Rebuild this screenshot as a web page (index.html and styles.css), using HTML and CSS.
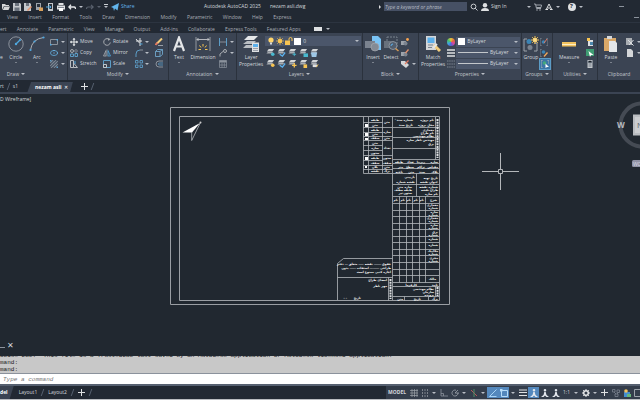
FILE: index.html
```
<!DOCTYPE html>
<html lang="en">
<head>
    <meta charset="UTF-8">
    <meta name="viewport" content="width=device-width, initial-scale=1.0">
    <title>Autodesk AutoCAD 2025 - nezam asli.dwg</title>
    <link rel="stylesheet" href="styles.css">
</head>
<body>
    <!-- shared icons -->
    <svg class="defs" aria-hidden="true">
        <symbol id="layers" viewBox="0 0 10 10"><path d="M3 1h6L7 4H1z" fill="#d4d6d8"/><path d="M2 4.500h6L6.500 6H.5z" fill="#a9adb2"/></symbol>
        <symbol id="bulb" viewBox="0 0 8 8"><circle cx="4" cy="3" r="2.600" fill="#ffd56b"/><path d="M3 5.500h2v2H3z" fill="#d8dadd"/></symbol>
        <symbol id="sun" viewBox="0 0 8 8"><circle cx="4" cy="4" r="2.200" fill="#f7c452"/><path d="M4 0v8M0 4h8M1.200 1.200l5.600 5.600M6.800 1.200L1.200 6.800" stroke="#f7c452" stroke-width=".7"/></symbol>
        <symbol id="doc" viewBox="0 0 8 8"><path d="M1 0h4l2 2v6H1z" fill="#d4d6d8"/></symbol>
        <symbol id="person" viewBox="0 0 8 8"><path d="M4 0a1.300 1.300 0 110 2.600A1.300 1.300 0 014 0zM3.300 3h1.400L5.500 6 8 8H5.500L4 6.500 2.500 8H0l2.500-2z" fill="#e4e8ee"/></symbol>
    </svg>

    <header class="titlebar">
        <div class="quick">
            <button aria-label="Open"><svg viewBox="0 0 8 8"><path d="M0 7V1h3l1 1h3v1H2z" fill="#d4d6d8"/><path d="M2.300 3.500H8L6.500 7H.8z" fill="#d4d6d8"/></svg></button>
            <button aria-label="Save"><svg viewBox="0 0 8 8"><path d="M0 0h7l1 1v7H0z" fill="#c3c7cb"/><path d="M2 0h4v3H2zM1.500 4.500h5V8h-5z" fill="#6a727d"/></svg></button>
            <button aria-label="Save as"><svg viewBox="0 0 8 8"><path d="M0 0h6l1 1v7H0z" fill="#c3c7cb"/><path d="M2 0h3v3H2z" fill="#6a727d"/><path d="M3.500 7.500l4-4" stroke="#e2916b" stroke-width="1.500"/></svg></button>
            <button aria-label="Open from web"><svg viewBox="0 0 8 8"><path d="M1 0h5v7H1z" fill="#9da3ab"/><path d="M2 1h3v3H2z" fill="#2b323d"/><path d="M4 4.500h4V8H4z" fill="#d9a15c"/></svg></button>
            <button aria-label="Save to web"><svg viewBox="0 0 8 8"><path d="M2 0h5v8H2z" fill="#c3c7cb"/><path d="M3 1h3v5H3z" fill="#2b323d"/><path d="M0 4h5M3.500 2.500L5 4 3.500 5.500" stroke="#4fa8e0" fill="none"/></svg></button>
            <button aria-label="Plot"><svg viewBox="0 0 8 8"><path d="M1.500 0h5v2h-5zM0 2.500h8v4H0z" fill="#dfe1e3"/><path d="M2 5h4v3H2z" fill="#fff"/><path d="M1 4.500h6" stroke="#5a626e" stroke-width=".7"/></svg></button>
            <button aria-label="Undo"><svg viewBox="0 0 8 8"><path d="M1 4h5q1.500 0 1.500 2M3 1.800L.8 4 3 6.200" stroke="#e6e8ea" stroke-width="1.300" fill="none"/></svg></button>
            <i class="caret"></i>
            <button aria-label="Redo"><svg viewBox="0 0 8 8"><path d="M7 4H2Q.5 4 .5 6M5 1.800L7.200 4 5 6.200" stroke="#59616d" stroke-width="1.200" fill="none"/></svg></button>
            <i class="caret dim"></i>
            <i class="caret barred"></i>
            <button class="share"><svg viewBox="0 0 8 8"><path d="M0 4l8-4-1.500 7.500L4 5.500 3 8 2.300 5z" fill="#62b5ec"/></svg>Share</button>
        </div>
        <div class="doc-title"><span>Autodesk AutoCAD 2025</span><span>nezam asli.dwg</span></div>
        <div class="account">
            <i class="caret right"></i>
            <input class="search" type="text" placeholder="Type a keyword or phrase" aria-label="Search help">
            <button aria-label="Search"><svg viewBox="0 0 8 8"><circle cx="3.500" cy="3.500" r="2.400" stroke="#c9ccd0" fill="none"/><path d="M5.200 5.200l2.300 2.300" stroke="#c9ccd0"/></svg></button>
            <button class="signin"><svg viewBox="0 0 8 8"><circle cx="4" cy="2.300" r="2.200" fill="#dfe1e3"/><path d="M0 8q0-3 4-3t4 3z" fill="#dfe1e3"/></svg>Sign In</button>
            <i class="caret"></i>
            <button aria-label="App store"><svg viewBox="0 0 8 8"><path d="M0 1h1.500l1 4.500h4.500M2 2h5.500L7 4.500H2.500" stroke="#9da3ab" fill="none"/><circle cx="3" cy="7" r=".8" fill="#9da3ab"/><circle cx="6" cy="7" r=".8" fill="#9da3ab"/></svg></button>
            <button aria-label="Autodesk app"><svg viewBox="0 0 8 8"><path d="M4 1L1 7M4 1l3 6M.5 6.500h2.500M5 6.500h2.500M2.500 5h3" stroke="#dfe1e3" fill="none"/></svg></button>
            <i class="caret"></i>
            <button class="help" aria-label="Help">?</button>
            <i class="caret"></i>
            <button class="minimize" aria-label="Minimize"></button>
        </div>
    </header>

    <nav class="menubar">
        <div class="menu">
            <a href="#">View</a><a href="#">Insert</a><a href="#">Format</a><a href="#">Tools</a><a href="#">Draw</a><a href="#">Dimension</a><a href="#">Modify</a><a href="#">Parametric</a><a href="#">Window</a><a href="#">Help</a><a href="#">Express</a>
        </div>
        <button class="minimize" aria-label="Minimize drawing"></button>
    </nav>

    <nav class="ribbon-tabs">
        <div class="tabs">
            <a href="#">ert</a><a href="#">Annotate</a><a href="#">Parametric</a><a href="#">View</a><a href="#">Manage</a><a href="#">Output</a><a href="#">Add-ins</a><a href="#">Collaborate</a><a href="#">Express Tools</a><a href="#">Featured Apps</a>
        </div>
        <button class="toggle" aria-label="Minimize ribbon"></button><i class="caret"></i>
    </nav>

    <main class="ribbon">
        <section class="panel draw">
            <div class="tools">
                <button class="big cut">e</button>
                <button class="big"><svg viewBox="0 0 16 16"><circle cx="8" cy="8" r="7.200" stroke="#8b929c" fill="none"/><path d="M8 8l4-4" stroke="#4fa8e0" stroke-width="1.200"/><circle cx="8" cy="8" r="1.200" fill="#4fa8e0"/><circle cx="12" cy="4" r="1" fill="#4fa8e0"/></svg>Circle<i class="caret"></i></button>
                <button class="big"><svg viewBox="0 0 16 16"><path d="M1.500 14Q3 3 14.500 1.500" stroke="#a9adb2" fill="none"/><circle cx="1.500" cy="14" r="1.100" fill="#4fa8e0"/><circle cx="5.500" cy="5.500" r="1.100" fill="#4fa8e0"/><circle cx="14.500" cy="1.500" r="1.100" fill="#4fa8e0"/></svg>Arc<i class="caret"></i></button>
                <div class="stack">
                    <button aria-label="Rectangle"><svg viewBox="0 0 8 8"><path d="M.5 1.500h7v5h-7z" stroke="#8b929c" fill="none"/><path d="M0 6h1.500v1.500H0zM6.500 1H8v1.500H6.500z" fill="#4fa8e0"/></svg><i class="caret"></i></button>
                    <button aria-label="Ellipse"><svg viewBox="0 0 8 8"><ellipse cx="4" cy="4" rx="3.500" ry="2.500" stroke="#5c9cc6" fill="none"/><path d="M3.400 3.400h1.200v1.200H3.400zM7 3.400h1v1.200H7zM3.400 1h1.200v1H3.400z" fill="#70bdf0"/></svg><i class="caret"></i></button>
                    <button aria-label="Hatch"><svg viewBox="0 0 8 8"><path d="M.5.5h7v7h-7z" fill="#525e6e"/><path d="M0 3l3-3M0 6l6-6M1 8l7-7M4 8l4-4" stroke="#9aa1aa" stroke-width=".6"/><path d="M0 0h1.500v1.500H0zM6.500 6.500H8V8H6.500z" fill="#5c9cc6"/></svg><i class="caret"></i></button>
                </div>
            </div>
            <h2>Draw <i class="caret"></i></h2>
        </section>

        <section class="panel modify">
            <div class="tools">
                <div class="stack">
                    <button><svg viewBox="0 0 8 8"><path d="M4 0v8M0 4h8" stroke="#e4e6e8"/><path d="M2.500 1.800L4 0l1.500 1.800zM2.500 6.200L4 8l1.500-1.800zM1.800 2.500L0 4l1.800 1.500zM6.200 2.500L8 4 6.200 5.500z" fill="#e4e6e8"/></svg>Move</button>
                    <button><svg viewBox="0 0 8 8"><circle cx="2" cy="2" r="1.500" stroke="#a9adb2" fill="none"/><circle cx="6" cy="2" r="1.300" stroke="#7b838f" fill="none"/><path d="M.5 5h3v2.500h-3zM5 4.500h2.500v3H5z" stroke="#5c9cc6" fill="none"/></svg>Copy</button>
                    <button><svg viewBox="0 0 8 8"><path d="M.5.500h3v7h-3zM3.500 3l4 4.500h-4" stroke="#b9bdc2" fill="none"/><path d="M5 1v3" stroke="#4fa8e0"/></svg>Stretch</button>
                </div>
                <div class="stack">
                    <button><svg viewBox="0 0 8 8"><path d="M5.500 1A3.300 3.300 0 107.300 4.500" stroke="#a9adb2" fill="none"/><path d="M4.500 0l3 1-2 2z" fill="#a9adb2"/></svg>Rotate</button>
                    <button><svg viewBox="0 0 8 8"><path d="M3 1.500v5.500H.5z" stroke="#a9adb2" stroke-width=".8" fill="none"/><path d="M5 1.500v5.500h2.500z" stroke="#4fa8e0" stroke-width=".8" fill="none"/><path d="M4 0v8" stroke="#a9adb2" stroke-width=".4"/></svg>Mirror</button>
                    <button><svg viewBox="0 0 8 8"><path d="M.5.500h7v7h-7z" stroke="#5c9cc6" fill="none"/><path d="M.5 4.500h3v3h-3z" stroke="#c3c7cb" fill="none"/></svg>Scale</button>
                </div>
                <div class="stack">
                    <button aria-label="Trim"><svg viewBox="0 0 8 8"><path d="M1 1l3.500 4M5 0v8M1 3h6" stroke="#dfe1e3" fill="none"/><path d="M5 6h2.500" stroke="#4fa8e0"/></svg><i class="caret"></i></button>
                    <button aria-label="Fillet"><svg viewBox="0 0 8 8"><path d="M1 8V5Q1 1 5 1" stroke="#5c9cc6" fill="none"/><path d="M5 1h3" stroke="#8b929c"/></svg><i class="caret"></i></button>
                    <button aria-label="Array"><svg viewBox="0 0 8 8"><path d="M.5.500H3V3H.5zM5 .500h2.500V3H5zM.5 5H3v2.500H.5zM5 5h2.500v2.500H5z" stroke="#5c9cc6" stroke-width=".9" fill="none"/></svg><i class="caret"></i></button>
                </div>
                <div class="stack">
                    <button aria-label="Erase"><svg viewBox="0 0 8 8"><path d="M2 5.500L7 .500" stroke="#f2cc7c" stroke-width="2"/><path d="M.5 6.800l2-2" stroke="#e27a62" stroke-width="2"/><path d="M3 7.500h5" stroke="#c3c7cb" stroke-width=".7"/></svg></button>
                    <button aria-label="Explode"><svg viewBox="0 0 8 8"><path d="M.5 2.500H5v5H.5zM.5 2.500l2-2h5v5L5 7.500M5 2.500l2.500-2" stroke="#6fa6cb" stroke-width=".9" fill="none"/></svg></button>
                    <button aria-label="Offset"><svg viewBox="0 0 8 8"><path d="M8 1H4a3 3 0 000 6h4" stroke="#8b929c" fill="none"/><path d="M8 3H4.500a1 1 0 000 2H8" stroke="#5c9cc6" stroke-width=".8" fill="none"/></svg></button>
                </div>
            </div>
            <h2>Modify <i class="caret"></i></h2>
        </section>

        <section class="panel annotation">
            <div class="tools">
                <button class="big"><svg viewBox="0 0 16 16"><path d="M3 15L8 1.500 13 15M4.800 10.500h6.400" stroke="#e4e6e8" stroke-width="2.200" fill="none"/></svg>Text<i class="caret"></i></button>
                <button class="big"><svg viewBox="0 0 16 16"><path d="M1 1v14M15 1v14" stroke="#a9adb2" stroke-width=".8"/><path d="M2 3.500h12M3.500 2L2 3.500 3.500 5M12.500 2L14 3.500 12.500 5" stroke="#d4d6d8" stroke-width=".8" fill="none"/><path d="M8 8v2.500M4.500 9.500l1.500 2M11.500 9.500l-1.500 2M3.500 13.500h2.500M10 13.500h2.500" stroke="#f7c452"/></svg>Dimension</button>
                <div class="stack">
                    <button aria-label="Linear"><svg viewBox="0 0 8 8"><path d="M.5 0v8M7.500 0v8" stroke="#5c9cc6"/><path d="M1 4h6" stroke="#a9adb2" stroke-width=".7"/></svg><i class="caret"></i></button>
                    <button aria-label="Leader"><svg viewBox="0 0 8 8"><path d="M1 7.500V5L4 2.500" stroke="#a9adb2" fill="none"/><circle cx="6" cy="2" r="1.500" stroke="#a9adb2" fill="none"/></svg><i class="caret"></i></button>
                    <button aria-label="Table"><svg viewBox="0 0 8 8"><path d="M.5.500h7v7h-7zM.5 5h7M3 2.500v5M5.300 2.500v5" stroke="#8b929c" stroke-width=".7" fill="none"/><path d="M.5.500h7v2h-7z" fill="#8b929c"/></svg></button>
                </div>
            </div>
            <h2>Annotation <i class="caret"></i></h2>
        </section>

        <section class="panel layer">
            <div class="tools">
                <button class="big"><svg viewBox="0 0 16 16"><path d="M5 0h10l-4 4H1z" fill="#e4e6e8"/><path d="M4 5h9l-3 3H0zM3 9h8l-2 3H0z" fill="#b9bdc2"/><path d="M9 6.500h7V16H9z" fill="#dfe1e3"/><path d="M10 8h5v3h-5z" fill="#5cb0ec"/><path d="M10 12.500h5M10 14.500h5" stroke="#7b838f" stroke-width=".7"/></svg>Layer<br>Properties</button>
                <div class="layer-tools">
                    <div class="field">
                        <svg><use href="#bulb"/></svg><svg><use href="#sun"/></svg>
                        <svg viewBox="0 0 8 8"><path d="M0 3.500h5V8H0z" fill="#f7c452"/><path d="M4 3.500V2a1.500 1.500 0 013 0v2" stroke="#f7c452" fill="none"/></svg>
                        <i class="swatch"></i>
                        <select aria-label="Layer"><option>0</option></select><i class="caret"></i>
                    </div>
                    <div class="layer-grid">
                        <button aria-label="Off"><svg viewBox="0 0 10 10"><use href="#layers"/><circle cx="7.500" cy="7" r="2" fill="#49b9cf"/></svg></button>
                        <button aria-label="Isolate"><svg viewBox="0 0 10 10"><use href="#layers"/><path d="M3 7l3 2 3-4" stroke="#5cb0ec" stroke-width="1.500" fill="none"/></svg></button>
                        <button aria-label="Freeze"><svg viewBox="0 0 10 10"><use href="#layers"/><path d="M7 5v4M5 7h4" stroke="#49b9cf"/></svg></button>
                        <button aria-label="Lock"><svg viewBox="0 0 10 10"><use href="#layers"/><path d="M5 6h5v4H5z" fill="#49b9cf"/></svg></button>
                        <button aria-label="Make current"><svg viewBox="0 0 10 10"><use href="#layers"/><path d="M1 5h7l-1 5H2z" fill="#9dc7e6"/></svg></button>
                        <button aria-label="Turn all on"><svg viewBox="0 0 10 10"><use href="#layers"/><circle cx="7.500" cy="7" r="2" fill="#f7c452"/></svg></button>
                        <button aria-label="Unisolate"><svg viewBox="0 0 10 10"><use href="#layers"/><path d="M3 7l3 2 3-4" stroke="#5cb0ec" stroke-width="1.500" fill="none"/></svg></button>
                        <button aria-label="Thaw all"><svg viewBox="0 0 10 10"><use href="#layers"/><path d="M7 4.500v5M4.500 7h5" stroke="#f7c452" stroke-width="1.500"/></svg></button>
                        <button aria-label="Unlock"><svg viewBox="0 0 10 10"><use href="#layers"/><path d="M5 6h4v4H5z" fill="#f7c452"/></svg></button>
                        <button aria-label="Match layer"><svg viewBox="0 0 10 10"><use href="#layers"/><path d="M3 6h5v3H3z" fill="#dfe1e3"/><path d="M7 9l2-3" stroke="#f7c452"/></svg></button>
                    </div>
                </div>
            </div>
            <h2>Layers <i class="caret"></i></h2>
        </section>

        <section class="panel block">
            <div class="tools">
                <button class="big"><svg viewBox="0 0 16 16"><path d="M7 0h6l3 3v11H7z" fill="#79c3f5"/><path d="M0 5h10v7H0z" fill="#7b838f"/><circle cx="10" cy="11" r="4" fill="#848b95" stroke="#a9adb2" stroke-width=".6"/></svg>Insert<i class="caret"></i></button>
                <button class="big"><svg viewBox="0 0 16 16"><path d="M4 1h10v10H4z" stroke="#7b838f" stroke-dasharray="2 1" fill="none"/><path d="M1 5h8v7H1z" fill="#68717d"/><circle cx="10" cy="9.500" r="4" fill="#525e6e" stroke="#8b929c"/><path d="M12.500 12.500L15.500 15" stroke="#d69a55" stroke-width="1.500"/><path d="M8 10a2 2 0 012-2" stroke="#5cb0ec" fill="none"/></svg>Detect</button>
                <div class="stack">
                    <button aria-label="Create block"><svg viewBox="0 0 8 8"><path d="M0 3h5v4H0z" fill="#9da3ab"/><circle cx="4.500" cy="5.500" r="2" fill="#7b838f"/><circle cx="6.500" cy="1.500" r="1.400" fill="#f7a452"/></svg></button>
                    <button aria-label="Edit block"><svg viewBox="0 0 8 8"><path d="M0 3h5v4H0z" fill="#9da3ab"/><circle cx="4.500" cy="5.500" r="2" fill="#7b838f"/><path d="M4.500 4l3-3.500" stroke="#e2916b" stroke-width="1.300"/></svg></button>
                    <button aria-label="Edit attributes"><svg viewBox="0 0 8 8"><path d="M0 1h4l4 4-3 3-5-4z" fill="#d4d6d8"/><path d="M4 4l3.500-3.500" stroke="#e27a62" stroke-width="1.300"/></svg><i class="caret"></i></button>
                </div>
            </div>
            <h2>Block <i class="caret"></i></h2>
        </section>

        <section class="panel props">
            <div class="tools">
                <button class="big"><svg viewBox="0 0 16 16"><path d="M1 0h10v14H1z" fill="#d4d6d8"/><path d="M2.500 1.500h7V7h-7z" fill="#5cb0ec"/><path d="M3 9h5M3 11.500h4" stroke="#7b838f"/><path d="M9 9l6 6" stroke="#f2cc7c" stroke-width="3"/><path d="M8 12l4-4" stroke="#e4e6e8" stroke-width="2"/></svg>Match<br>Properties</button>
                <div class="prop-rows">
                    <i class="wheel"></i>
                    <div class="field"><i class="swatch"></i><select aria-label="Object color"><option>ByLayer</option></select><i class="caret"></i></div>
                    <svg viewBox="0 0 8 8"><path d="M0 1h8M0 4h8M0 7h8" stroke="#dfe1e3" stroke-width="1.300"/></svg>
                    <div class="field"><i class="line"></i><select class="short" aria-label="Lineweight"><option>ByLayer</option></select><i class="caret"></i></div>
                    <svg viewBox="0 0 8 8"><path d="M0 1h8M0 4h8M0 7h8" stroke="#7b838f" stroke-dasharray="1.500 .7"/></svg>
                    <div class="field"><i class="line"></i><select class="short" aria-label="Linetype"><option>ByLayer</option></select><i class="caret"></i></div>
                </div>
            </div>
            <h2>Properties <i class="caret"></i></h2>
        </section>

        <section class="panel groups">
            <div class="tools">
                <button class="big"><svg viewBox="0 0 16 16"><path d="M4 3H1v12h3M11 7h3v8h-3" stroke="#9da3ab" fill="none"/><circle cx="6" cy="5.500" r="2.500" fill="#3b84b5"/><circle cx="7" cy="11.500" r="2.500" fill="#7b838f"/><path d="M12 0v8M8 4h8M9.200 1.200l5.600 5.600M14.800 1.200L9.200 6.800" stroke="#f7c452"/><circle cx="12" cy="4" r="2" fill="#ffdf8a"/></svg>Group</button>
                <div class="stack">
                    <button aria-label="Ungroup"><svg viewBox="0 0 8 8"><path d="M2 0H0v8h2M6 0h2v8H6" stroke="#7b838f" fill="none"/><circle cx="3.500" cy="4" r="1.800" fill="#3b84b5"/><path d="M4 5l3-4" stroke="#e27a62"/></svg></button>
                    <button aria-label="Edit group"><svg viewBox="0 0 8 8"><path d="M2 0H0v8h2" stroke="#7b838f" fill="none"/><circle cx="3.500" cy="3" r="1.800" fill="#3b84b5"/><path d="M4 7.500l3.500-4" stroke="#f0a85c" stroke-width="1.300"/></svg></button>
                    <button class="on" aria-label="Group selection"><svg viewBox="0 0 8 8"><path d="M2 0H0v8h2M6 0h2v4" stroke="#a9adb2" fill="none"/><circle cx="3.500" cy="3" r="1.800" fill="#44a97c"/><path d="M4.500 3.500L8 7H6L4.500 8z" fill="#fff"/></svg></button>
                </div>
            </div>
            <h2>Groups <i class="caret"></i></h2>
        </section>

        <section class="panel utilities">
            <div class="tools">
                <button class="big"><svg viewBox="0 0 16 16"><path d="M1 6h14v4.500H1z" fill="#f2c25f"/><path d="M1 8.500h14" stroke="#fff0c4"/></svg>Measure<i class="caret"></i></button>
                <div class="stack">
                    <button aria-label="Quick select"><svg viewBox="0 0 8 8"><path d="M2 2h5v6H2z" fill="#dfe1e3"/><path d="M1 0h3v3H1z" fill="#f7c452"/><path d="M4 4h3v3H4z" fill="#4b87ad"/></svg></button>
                    <button aria-label="Select all"><svg viewBox="0 0 8 8"><path d="M0 0h8v7H0z" fill="#3f9c73"/><path d="M2.500 2L7.500 6H5L4 8z" fill="#fff"/></svg></button>
                    <button aria-label="Calculator"><svg viewBox="0 0 8 8"><path d="M1.500 0h5v8h-5z" fill="#c3c7cb"/><path d="M2.500 1h3v1.500h-3zM2.500 4h3M2.500 6h3" stroke="#525e6e" stroke-width=".7"/></svg></button>
                </div>
            </div>
            <h2>Utilities <i class="caret"></i></h2>
        </section>

        <section class="panel clipboard">
            <div class="tools">
                <button class="big"><svg viewBox="0 0 16 16"><path d="M1 2h12v13H1z" fill="#d9a868"/><path d="M4 0h5v3H4z" fill="#d4d6d8"/><path d="M6 5h6l2 2v9H6z" fill="#e4e6e8"/></svg>Paste<i class="caret"></i></button>
                <div class="stack">
                    <button aria-label="Cut"><svg viewBox="0 0 8 8"><path d="M0 0h6v7H0z" fill="#a9adb2"/><path d="M2 2l5.500 5.500M7.500 2L3 7" stroke="#dfe1e3"/></svg><i class="caret"></i></button>
                    <button aria-label="Copy clip"><svg><use href="#doc"/></svg><i class="caret"></i></button>
                </div>
            </div>
            <h2>Clipboard</h2>
        </section>
    </main>

    <nav class="file-tabs">
        <a href="#">rt</a><i class="slash"></i>
        <a href="#">s1</a>
        <a href="#" class="active">nezam asli <span>✕</span></a>
        <button class="plus" aria-label="New drawing"></button><i class="slash"></i>
    </nav>

    <section class="canvas">
        <div class="view-label">D Wireframe]</div>
        <svg class="sheet" viewBox="170 107 280 198">
            <path class="frame" d="M170.500 107.500h279v197h-279zM179.500 116.500h260v184h-260z"/>
            <!-- north arrow -->
            <path d="M182.500 132.500L200 123l-8 9.500z" fill="#fff"/>
            <path class="rule" d="M191.700 132v8.500L200.500 122.500"/>
            <circle cx="200.500" cy="122.500" r="1" fill="#ccc"/>
            <!-- legend table -->
            <path class="rule" d="M363.500 117v56.500h29M368.500 117v56M382.500 117v56M363.500 122.500h19M363.500 127.500h29M363.500 132.500h19M363.500 136.500h29M363.500 140.500h29M363.500 145.500h19M363.500 150.500h19M363.500 155.500h29M363.500 160.500h19M363.500 165.500h29M363.500 169.500h29"/>
            <path d="M365 124h3v3h-3zM365 138h3v2h-3zM365 157h3v3h-3zM365 133h3v3h-3zM365 166h2v2h-2z" fill="#fff"/>
            <g class="note mid">
                <text x="375" y="121">طبقه</text><text x="375" y="126">متن</text><text x="375" y="131">طبقه</text><text x="375" y="135">متن</text><text x="375" y="139">سقف</text><text x="375" y="144">متن</text><text x="375" y="149">سازه</text><text x="375" y="154">ستون</text><text x="375" y="159">طبقه</text><text x="375" y="164">سقف</text><text x="375" y="168">پلان</text><text x="375" y="172">نقشه</text>
                <text x="387" y="123">متن</text><text x="387" y="133">سازه</text><text x="387" y="139">متن</text><text x="387" y="149">تعداد</text><text x="387" y="159">ستون</text><text x="387" y="164">سقف</text><text x="387" y="168">متن</text><text x="387" y="172">برگ</text>
            </g>
            <!-- title block -->
            <path class="rule" d="M392.500 117v183M393 127.500h46M393 137.500h46M393 148.500h46M393 159.500h46M393 163.500h46M393 168.500h46M393 173.500h46M416.500 173.500v23M393 184.500h46M393 196.500h46M435.500 117v42.500"/>
            <path class="rule" d="M399.500 196.500v86M406.500 196.500v86M412.500 196.500v86M419.500 196.500v86M425.500 196.500v86M393 203.500h46M393 210.500h46M393 216.500h46M393 223.500h46M393 229.500h46M393 236.500h46M393 242.500h46M393 249.500h46M393 255.500h46M393 262.500h46M393 269.500h46M393 275.500h46M393 282.500h46M393 286.500h46M393 296.500h46M435.500 286.500v10M404.500 296.500v4M428.500 296.500v4"/>
            <path class="stripe" d="M437.500 119v39M437.500 287v9M390.500 279v20"/>
            <g class="note end">
                <text x="434" y="121">نام پروژه</text><text x="413" y="121">شماره سند</text><text x="396" y="120">-</text><text x="434" y="126">محل پروژه</text><text x="413" y="126">تاریخ سند</text>
                <text x="434" y="131">معماری</text><text x="434" y="134">نام طراح</text><text x="434" y="137">نظام مهندسی</text>
                <text x="434" y="141">مهندس ناظر سازه</text><text x="434" y="145">برق</text>
                <text x="438" y="163">سازه</text><text x="425" y="163">زیربنا</text><text x="414" y="163">تعداد</text><text x="403" y="163">طبقه</text>
                <text x="438" y="168">مقیاس</text><text x="425" y="168">تراکم</text><text x="414" y="168">سطح</text><text x="403" y="168">متر</text>
                <text x="438" y="173">پلاک</text><text x="425" y="173">سند</text><text x="414" y="173">متن</text><text x="403" y="173">ناحیه</text>
                <text x="438" y="179">تاریخ تهیه</text><text x="415" y="178">بازبینی</text><text x="438" y="183">عنوان نقشه</text><text x="415" y="183">نقشه شماره</text>
                <text x="438" y="188">شماره نقشه</text><text x="412" y="188">سازه</text><text x="403" y="188">متن</text><text x="438" y="191">طراح نقشه</text><text x="412" y="191">طبقه</text><text x="403" y="191">سقف</text><text x="438" y="195">نام سازه</text><text x="412" y="194">ستون</text><text x="403" y="194">تیر</text>
                <text x="437" y="201">شرح</text><text x="424" y="201">نام</text><text x="418" y="201">نام</text><text x="411" y="201">نام</text><text x="405" y="201">نام</text><text x="398" y="201">نام</text>
                <text x="438" y="206">معماری</text><text x="438" y="209">شماره</text><text x="438" y="213">سازه</text><text x="438" y="216">شماره</text><text x="438" y="219">معماری</text><text x="438" y="222">شماره</text><text x="438" y="226">سازه</text><text x="438" y="229">شماره</text><text x="438" y="233">برق</text><text x="438" y="236">شماره</text><text x="438" y="240">شماره</text><text x="438" y="246">شماره</text><text x="438" y="252">مکانیک</text><text x="438" y="255">شماره</text><text x="438" y="259">مجری</text><text x="438" y="262">شماره</text><text x="436" y="280">مالک</text>
                <text x="417" y="286">کارفرما</text><text x="438" y="286">تایید</text><text x="434" y="290">نظام مهندسی</text><text x="434" y="293">سازمان</text><text x="434" y="296">پرونده</text><text x="438" y="300">برگ</text><text x="421" y="300">تاریخ</text><text x="403" y="300">متن</text>
            </g>
            <!-- notes box -->
            <path class="rule" d="M337.500 300v-36.500l6-5h49M337.500 277.500h55M388.500 277.500v23"/>
            <g class="note end">
                <text x="391" y="265">حقوق ـــــــ نقشه ـــــ متعلق ـــ دفتر</text><text x="391" y="269">طراحی ـــــــــ استفاده ــــــ بدون</text><text x="391" y="273">اجازه کتبی ممنوع است</text>
                <text x="387" y="281">امضای طراح</text><text x="387" y="287">مهر ناظر</text><text x="361" y="299">تاریخ</text><text x="347" y="299">- -</text>
            </g>
        </svg>
        <svg class="crosshair" viewBox="0 0 37 37"><path d="M18.500 0v16M18.500 21v16M0 18.500h16M21 18.500h16M16.500 16.500h4v4h-4z" stroke="#b4b7ba" fill="none"/></svg>
        <div class="compass">
            <svg viewBox="0 0 24 70"><circle cx="26" cy="25" r="21.500" stroke="#454b54" stroke-width="4" fill="none"/><path d="M17 14.500h7v21h-7z" fill="#b9bcc0"/><path d="M19 17h5v16h-5z" fill="#cbcdd0"/><text x="21" y="28" font-size="8" fill="#59616d">N</text><text class="west" x="1" y="28">W</text><rect x="16" y="60" width="20" height="7" rx="1.500" fill="#9193a6"/><text x="17" y="66" font-size="5" fill="#d8d9e4">WCS</text></svg>
        </div>
        <div class="prompt-tools"><i></i><button aria-label="Close command line">✕</button></div>
    </section>

    <section class="command">
        <div class="history">
            <p>ocise DWG.&nbsp; This file is a TrustedDWG last saved by an Autodesk application or Autodesk licensed application.</p>
            <p>mand:</p>
            <p>mand:</p>
        </div>
        <input type="text" placeholder="Type a command" aria-label="Command">
    </section>

    <footer class="statusbar">
        <nav class="layout-tabs">
            <a href="#" class="active">del</a>
            <a href="#">Layout1</a><i class="slash"></i>
            <a href="#">Layout2</a><i class="slash"></i>
            <button class="plus" aria-label="New layout"></button><i class="slash"></i>
        </nav>
        <div class="status-tools">
            <button class="model">MODEL</button>
            <button aria-label="Grid"><svg viewBox="0 0 8 8"><path d="M2 0v8M4.500 0v8M7 0v8M0 1.500h8M0 4h8M0 6.500h8" stroke="#9da3ab" stroke-width=".7"/></svg></button>
            <button aria-label="Snap"><svg viewBox="0 0 8 8"><path d="M1 1h7M1 4h7M1 7h7" stroke="#c3c7cb" stroke-dasharray="1 1.500"/></svg></button>
            <i class="caret"></i>
            <button aria-label="Ortho"><svg viewBox="0 0 8 8"><path d="M1 0v7h7M1 4.500h2.500V7" stroke="#8b929c" stroke-width=".8" fill="none"/></svg></button>
            <button aria-label="Polar"><svg viewBox="0 0 8 8"><path d="M7 4a3 3 0 11-2-2.800M4 4h4M4 4l3-3" stroke="#9da3ab" stroke-width=".8" fill="none"/></svg></button>
            <i class="caret"></i>
            <button aria-label="Isometric"><svg viewBox="0 0 8 8"><path d="M1 1l6 6" stroke="#b35a5a"/><path d="M4 0v8" stroke="#4d8f68"/></svg></button>
            <i class="caret"></i>
            <button class="on" aria-label="Snap tracking"><svg viewBox="0 0 8 8"><path d="M7.500.500l-7 7h7" stroke="#a9d4f5" fill="none"/></svg></button>
            <button class="on" aria-label="Object snap"><svg viewBox="0 0 8 8"><path d="M1.500 1.500h6v6h-6z" stroke="#b7dcf8" fill="none"/><path d="M0 0h2.500v2.500H0z" fill="#b7dcf8"/></svg></button>
            <i class="caret"></i>
            <button aria-label="Lineweight"><svg viewBox="0 0 8 8"><path d="M0 1h8M0 3.500h8M0 6.500h8" stroke="#dfe1e3" stroke-width="1.200"/></svg></button>
            <button class="on" aria-label="Annotation visibility"><svg><use href="#person"/></svg></button>
            <button aria-label="Auto scale"><svg><use href="#person"/></svg></button>
            <button aria-label="Annotation scale"><svg><use href="#person"/></svg></button>
            <button class="scale">1:1</button>
            <i class="caret"></i>
            <button aria-label="Workspace"><svg viewBox="0 0 8 8"><circle cx="4" cy="4" r="2.300" stroke="#e4e6e8" stroke-width="1.500" fill="none"/><path d="M4 0v1.500M4 6.500V8M0 4h1.500M6.500 4H8M1.200 1.200l1 1M5.800 5.800l1 1M6.800 1.200l-1 1M1.200 6.800l1-1" stroke="#e4e6e8"/></svg></button>
            <i class="caret"></i>
            <button class="monitor" aria-label="Annotation monitor"><i class="plus"></i></button>
            <button aria-label="Isolate objects"><svg viewBox="0 0 8 8"><path d="M.5.500H3v2.500H.5zM5 1h2.500v2.500H5zM3 5h3v2.500H3zM2 3l2 2M6.500 3.500L5 5" stroke="#7b838f" stroke-width=".8" fill="none"/></svg></button>
            <button aria-label="Hardware acceleration"><svg viewBox="0 0 8 8"><path d="M1 3h6v5H1z" fill="#448ed0"/><circle cx="3" cy="2" r="1.800" fill="#f2c25f"/><path d="M4 5h4v3H4z" fill="#67b77a"/></svg></button>
            <button aria-label="Clean screen"><svg viewBox="0 0 8 8"><path d="M.5.500h7v7h-7z" stroke="#9da3ab" fill="none"/></svg></button>
        </div>
    </footer>
</body>
</html>
```
FILE: styles.css
```
* {
    box-sizing: border-box;
}
body {
    margin: 0;
    height: 100vh;
    display: flex;
    flex-direction: column;
    overflow: hidden;
    background-color: #222933;
    color: #d4d8dd;
    font-family: "Open Sans", "Noto Sans", sans-serif;
    font-size: 5px;
    line-height: 7px;
    white-space: nowrap;
}
button, input, select {
    font: inherit;
    color: inherit;
    background: none;
    border: none;
    margin: 0;
    padding: 0;
    border-radius: 0;
    outline: none;
}
button {
    display: flex;
    align-items: center;
    flex: none;
}
select {
    appearance: none;
    flex: 1;
    min-width: 0;
}
a {
    color: inherit;
    text-decoration: none;
}
svg {
    display: block;
    width: 8px;
    height: 8px;
    flex: none;
}
.defs {
    position: absolute;
    width: 0;
    height: 0;
}
.caret {
    display: inline-block;
    flex: none;
    width: 4px;
    border: 2px solid transparent;
    border-top-color: #b9bec6;
    border-bottom: none;
}
.caret.dim {
    border-top-color: #59616d;
}
.caret.right {
    width: 2px;
    border: 2px solid transparent;
    border-left-color: #dfe1e3;
    border-right: none;
}
.minimize {
    width: 5px;
    height: 1px;
    background-color: #8b929c;
}
.plus {
    width: 7px;
    height: 7px;
    background: linear-gradient(#dfe1e3, #dfe1e3) center / 7px 1px no-repeat,
                linear-gradient(#dfe1e3, #dfe1e3) center / 1px 7px no-repeat;
}
.slash {
    width: 1px;
    height: 7px;
    background-color: #566070;
    transform: skewX(-20deg);
}

/* top bars */
.titlebar {
    display: grid;
    grid-template-columns: 204fr 175fr 261fr;
    height: 13px;
    flex: none;
    align-items: center;
}
.quick {
    display: flex;
    align-items: center;
    gap: 3px;
    padding-left: 2px;
}
.barred {
    position: relative;
}
.barred::before {
    content: "";
    position: absolute;
    left: -2px;
    top: -4px;
    width: 4px;
    height: 1px;
    background-color: #c9cdd2;
}
.share {
    gap: 2px;
    color: #62b5ec;
}
.doc-title {
    display: flex;
    gap: 9px;
}
.account {
    display: flex;
    align-items: center;
    gap: 3px;
}
.search {
    width: 83px;
    height: 9px;
    padding-left: 1px;
    background-color: #465064;
}
.search::placeholder {
    color: #b9bec6;
    font-style: italic;
}
.signin {
    gap: 2px;
    margin-right: 17px;
}
.help {
    width: 8px;
    height: 8px;
    margin-left: 5px;
    justify-content: center;
    border-radius: 50%;
    background-color: #dfe1e3;
    color: #222933;
    font-size: 6px;
    font-weight: bold;
}
.account .minimize {
    margin: 0 16px 0 auto;
}
.menubar {
    display: flex;
    align-items: center;
    justify-content: space-between;
    height: 10px;
    flex: none;
    padding: 0 1px 0 7px;
    border-bottom: 1px solid #2c3440;
    color: #a9aeb6;
}
.menu, .tabs {
    display: flex;
    justify-content: space-between;
    flex: none;
    width: 45%;
}
.ribbon-tabs {
    display: flex;
    align-items: center;
    height: 10px;
    flex: none;
    padding-top: 2px;
    color: #a9aeb6;
}
.tabs {
    width: 47%;
}
.toggle {
    width: 8px;
    height: 4px;
    margin: 0 4px 0 13px;
    background-color: #dfe1e3;
}

/* ribbon */
.ribbon {
    display: grid;
    grid-template-columns: 68fr 101fr 68fr 126fr 56fr 103fr 31fr 45fr 42fr;
    flex: none;
    height: 47px;
    background-color: #3b4453;
}
.panel {
    display: flex;
    flex-direction: column;
    min-width: 0;
    border-right: 1px solid #2b323d;
}
.panel h2 {
    margin: 0;
    height: 10px;
    font-size: 5px;
    font-weight: normal;
    line-height: 9px;
    text-align: center;
    color: #c3c7cd;
}
.panel h2 .caret {
    margin: 0 0 1px 1px;
}
.tools {
    display: flex;
    flex: 1;
    gap: 3px;
    padding: 3px 2px 0;
}
.big {
    display: flex;
    flex-direction: column;
    align-self: flex-start;
    text-align: center;
}
.big svg {
    width: 16px;
    height: 16px;
    margin-bottom: 2px;
}
.big .caret {
    width: 2px;
    border-width: 1px;
    border-bottom: none;
    margin-top: 1px;
}
.cut {
    padding-top: 18px;
}
.stack {
    display: grid;
    grid-template-rows: repeat(3, 11px);
    align-items: center;
}
.stack button {
    gap: 3px;
}
.draw .tools {
    gap: 5px;
    padding-left: 0;
}
.draw h2 {
    padding-right: 35px;
}
.modify .tools {
    justify-content: space-between;
    padding-right: 5px;
}
.modify .stack button {
    gap: 2px;
}
.annotation .tools {
    justify-content: space-between;
}
.layer-tools {
    flex: 1;
}
.layer .tools, .props .tools {
    gap: 2px;
    padding-right: 1px;
}
.field {
    display: flex;
    align-items: center;
    gap: 2px;
    height: 10px;
    min-width: 0;
    padding: 0 2px;
    background-color: #4b566a;
}
.swatch {
    width: 7px;
    height: 7px;
    flex: none;
    background-color: #fff;
}
.layer .field {
    gap: 1px;
}
.layer .swatch {
    margin-right: 1px;
}
.layer-grid {
    display: grid;
    grid-template-columns: repeat(5, 11px);
    grid-auto-rows: 11px;
    align-items: center;
    padding: 1px 0 0 1px;
}
.layer-grid svg {
    width: 9px;
    height: 9px;
}
.block .tools {
    gap: 2px;
}
.prop-rows {
    display: grid;
    grid-template-columns: 8px 1fr;
    grid-auto-rows: 11px;
    align-items: center;
    column-gap: 1px;
    flex: 1;
    min-width: 0;
}
.wheel {
    width: 8px;
    height: 8px;
    border-radius: 50%;
    background: conic-gradient(#e8c53c, #e5663c, #d645a3, #5560d8, #3fa7e0, #4bc26a, #e8c53c);
}
.line {
    flex: 1;
    height: 1px;
    background-color: #c3c7cb;
}
select.short {
    flex: none;
    width: 22px;
}
.on {
    background-color: #3c76a6;
}
.groups .tools, .utilities .tools {
    gap: 1px;
    padding: 3px 1px 0;
    justify-content: space-between;
}
.groups .on {
    margin-left: -1px;
    padding: 1px;
    border: 1px solid #5c9cc6;
}
.utilities .tools {
    padding: 3px 3px 0 6px;
}
.clipboard {
    border-right: none;
}
.clipboard .tools {
    gap: 7px;
    padding-left: 5px;
}

/* tabs of open drawings */
.file-tabs {
    display: flex;
    align-items: center;
    gap: 4px;
    flex: none;
    height: 14px;
    padding-top: 1px;
    border-bottom: 2px solid #3b4453;
}
.file-tabs .active {
    align-self: stretch;
    margin: 1px 4px -1px 5px;
    padding: 1px 5px 0 8px;
    line-height: 9px;
    background-color: #3b4453;
    clip-path: polygon(4px 0, 100% 0, calc(100% - 3px) 100%, 0 100%);
    color: #fff;
    font-weight: bold;
}
.file-tabs .active span {
    margin-left: 1px;
    font-weight: normal;
}

/* drawing area */
.canvas {
    position: relative;
    flex: 1;
    min-height: 0;
    overflow: hidden;
    background-color: #212830;
}
.view-label {
    padding-top: 2px;
    font-size: 5px;
}
.sheet {
    position: absolute;
    left: 170px;
    top: 13px;
    width: 280px;
    height: 198px;
}
.frame {
    fill: none;
    stroke: #9a9ea3;
}
.rule {
    fill: none;
    stroke: #b4b8bc;
    stroke-width: .8;
}
.stripe {
    stroke: #dfe1e3;
    stroke-width: 2;
    stroke-dasharray: 2 .7;
}
.note {
    fill: #fff;
    font: bold 3px "DejaVu Sans", sans-serif;
}
.mid {
    text-anchor: middle;
}
.end {
    text-anchor: end;
}
.crosshair {
    position: absolute;
    left: 482px;
    top: 59px;
    width: 37px;
    height: 37px;
}
.compass {
    position: absolute;
    right: 0;
    top: 6px;
}
.compass svg {
    width: 24px;
    height: 70px;
}
.west {
    fill: #b9bcc0;
    font-size: 8px;
    font-weight: bold;
}
.prompt-tools {
    position: absolute;
    left: 0;
    bottom: 8px;
    display: flex;
    align-items: flex-end;
    gap: 2px;
    font-size: 8px;
}
.prompt-tools i {
    width: 5px;
    height: 1px;
    background-color: #8b929c;
}

/* command line */
.command {
    flex: none;
    border-bottom: 2px solid #566070;
    font-family: "Liberation Mono", monospace;
    font-size: 6px;
}
.history {
    display: flex;
    flex-direction: column;
    justify-content: flex-end;
    height: 18px;
    overflow: hidden;
    background-color: #c8c8c8;
    border-bottom: 1px solid #8b929c;
    color: #222;
}
.history p {
    margin: 0;
}
.command input {
    display: block;
    width: 100%;
    height: 10px;
    padding-left: 3px;
    background-color: #fff;
    color: #222;
}
.command input::placeholder {
    color: #777;
    font-style: italic;
}

/* bottom bar */
.statusbar {
    display: flex;
    justify-content: space-between;
    flex: none;
    height: 14px;
    border-bottom: 1px solid #b9bcc0;
}
.layout-tabs {
    display: flex;
    align-items: center;
    gap: 5px;
}
.layout-tabs .active {
    align-self: stretch;
    padding-right: 6px;
    line-height: 13px;
    background-color: #3b4453;
    clip-path: polygon(0 0, 100% 0, calc(100% - 4px) 100%, 0 100%);
    color: #fff;
    font-weight: bold;
}
.status-tools {
    display: flex;
    align-items: center;
    flex: none;
    width: 254px;
    overflow: hidden;
    background-color: #343d4b;
}
.status-tools button {
    justify-content: center;
    width: 11px;
    height: 11px;
}
.status-tools .caret {
    margin: 0 2px;
}
.status-tools .on {
    background-color: #5488bd;
}
.status-tools .model {
    width: 22px;
    font-weight: bold;
}
```
